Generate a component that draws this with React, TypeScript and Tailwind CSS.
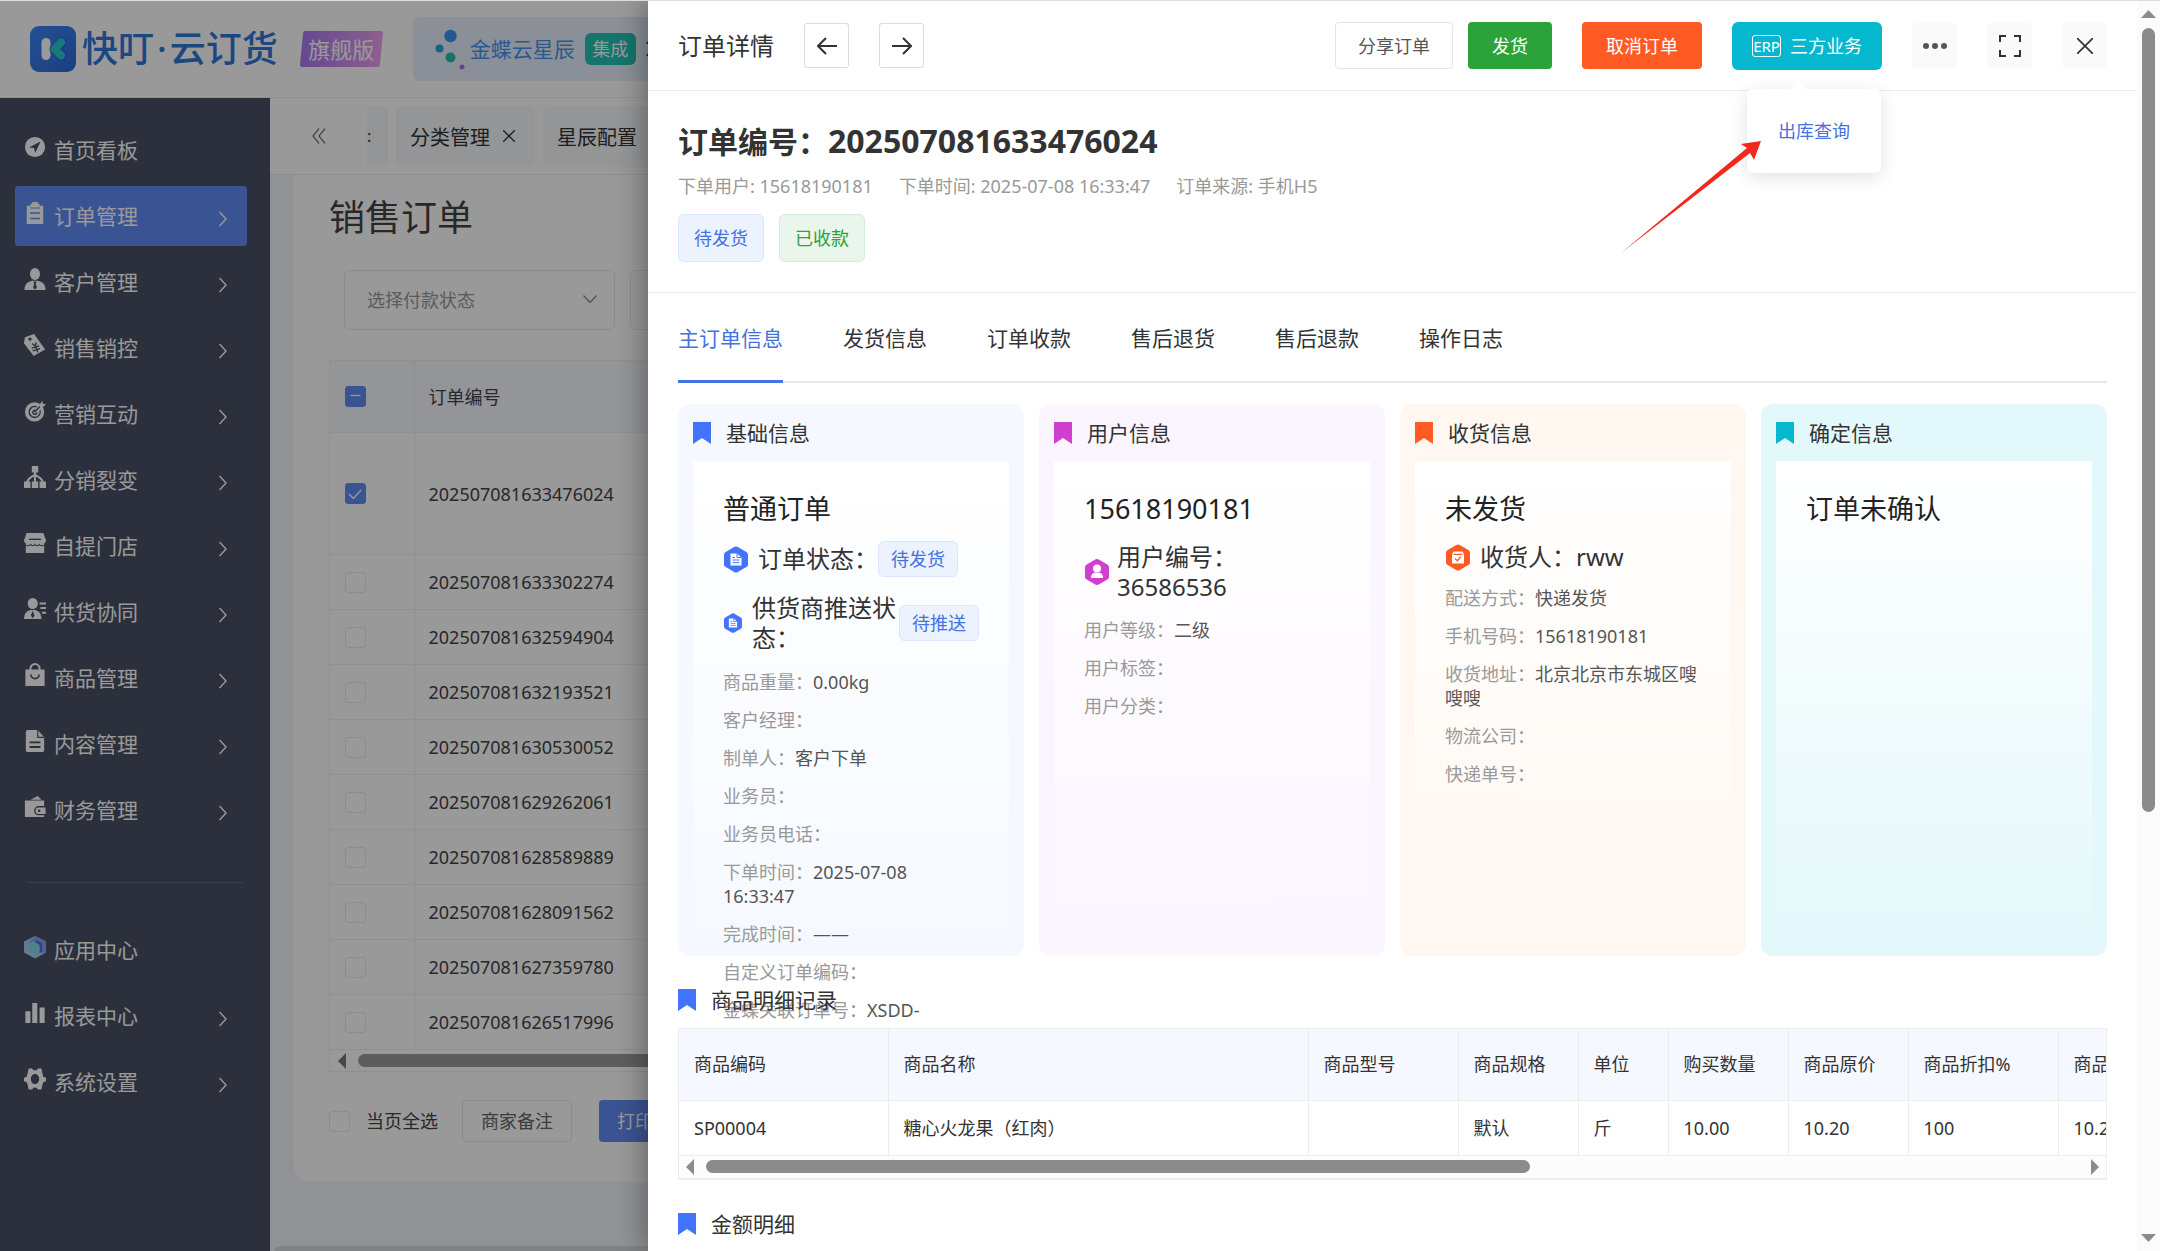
import React from "react";

type IconProps = { className?: string };

const menuIcons: Record<string, React.ReactNode> = {
  compass: (
    <>
      <circle cx="12" cy="12" r="11" fill="currentColor" />
      <path d="M18 6 5.500 12.500 11 13l1.200 5.500z" fill="#495064" />
    </>
  ),
  clipboard: (
    <>
      <path d="M3 4h4v3h10V4h4v20H3z" fill="currentColor" />
      <path d="M9 0h6v2h2v4H7V2h2z" fill="currentColor" />
      <path d="M6.500 12h11M6.500 18h11" stroke="#628cf5" strokeWidth="1.800" />
    </>
  ),
  person: (
    <>
      <ellipse cx="12" cy="6.500" rx="5.500" ry="6.500" fill="currentColor" />
      <path d="M0.500 24c0-6 3.500-9 8.500-10h6c5 1 8.500 4 8.500 10z" fill="currentColor" />
      <path d="m12 14 1.800 2-1 1 1.200 4.500-2 2-2-2 1.200-4.500-1-1z" fill="#495064" />
    </>
  ),
  tag: (
    <>
      <path d="M1 3.500 11 0l12 17-12.500 7L0 10z" fill="currentColor" />
      <circle cx="6.500" cy="5.500" r="1.800" fill="#495064" />
      <path d="m9 10.500 3.500 2.500 1-4M8.500 15.500l8-2.500M9.500 18.500l8-2.500M12.500 13l2.500 7" stroke="#495064" strokeWidth="1.400" fill="none" />
    </>
  ),
  target: (
    <>
      <circle cx="11.500" cy="13" r="10.500" fill="currentColor" />
      <path d="M14 7.500a6 6 0 1 0 3.500 4M13 11.500a2.200 2.200 0 1 0 1 2" stroke="#495064" strokeWidth="1.500" fill="none" />
      <path d="m11.500 13 8-8" stroke="#495064" strokeWidth="1.500" />
      <path d="m16 6 4-5 .8 3L24 5l-5 4z" fill="currentColor" />
    </>
  ),
  tree: (
    <>
      <path d="M8.500 0h7v7h-7zM0 17h7v7H0zM8.500 17h7v7h-7zM17 17h7v7h-7z" fill="currentColor" />
      <path d="M12 6v12M12 9c-2 3-8 3-8.500 9M12 9c2 3 8 3 8.500 9" stroke="currentColor" strokeWidth="2.200" fill="none" />
    </>
  ),
  shop: (
    <>
      <path d="M3 1h18l3 8c0 2-1 3-2 3.500V23H2V12.500C1 12 0 11 0 9z" fill="currentColor" />
      <path d="M5.500 8h13" stroke="#495064" strokeWidth="1.500" />
      <path d="M1 14c2 1.500 5 1.500 6-.5 2 2 4 2 5 0 1 2 3 2 5 0 1 2 4 2 6 .5" stroke="#495064" strokeWidth="1.200" fill="none" />
    </>
  ),
  supplier: (
    <>
      <ellipse cx="9.500" cy="6" rx="5.500" ry="6" fill="currentColor" />
      <path d="M0 23c0-6 3-9 7-10h5c4 1 7 4 7 10z" fill="currentColor" />
      <path d="m9.500 14 2 5-2 3-2-3z" fill="#495064" />
      <path d="M17 6h7M18 11h6M19.500 16H24" stroke="currentColor" strokeWidth="2.200" />
    </>
  ),
  bag: (
    <>
      <path d="M1.500 6h21v18h-21z" fill="currentColor" />
      <path d="M7 9V5a5 5 0 0 1 10 0v4" stroke="currentColor" strokeWidth="2.200" fill="none" />
      <path d="M7.500 11.500a4.500 4.500 0 0 0 9 0" stroke="#495064" strokeWidth="1.800" fill="none" />
    </>
  ),
  doc: (
    <>
      <path d="M4 0h11l7 8v14a2 2 0 0 1-2 2H4a2 2 0 0 1-2-2V2a2 2 0 0 1 2-2z" fill="currentColor" />
      <path d="M15 0v8h7" stroke="#495064" strokeWidth="1.300" fill="none" />
      <path d="M6 13.500h12M6 18.500h12" stroke="#495064" strokeWidth="2" />
    </>
  ),
  wallet: (
    <>
      <path d="m7 4 8-4 4 4z" fill="currentColor" />
      <path d="M1 5h21v6h-6a5 5 0 0 0 0 10h6v2H1z" fill="currentColor" />
      <path d="M16 12.500h7.500v7H16a3.500 3.500 0 0 1 0-7z" fill="currentColor" />
      <circle cx="16.500" cy="16" r="1.400" fill="#495064" />
    </>
  ),
  bars: <path d="M1.500 10H7v13H1.500zM9 1h5.500v22H9zM17 6h5.500v17H17z" fill="currentColor" />,
  gear: (
    <path
      fillRule="evenodd"
      fill="currentColor"
      d="M5 0.500h4l1 2h4l1-2h4l1 5 1 4 3 1v4l-3 1-1 3-1 5h-4l-1-2h-4l-1 2H5l-1-5-1-3-3-1v-4l3-1 1-4zM12 6.500c-2.800 0-4.500 2.500-4.500 5.500s1.700 5.500 4.500 5.500 4.500-2.500 4.500-5.500S14.800 6.500 12 6.500z"
    />
  ),
  cube: (
    <>
      <path d="m12 0 12 6v12l-12 6.500L0 18V6z" fill="#a9cdf8" />
      <path d="M12 0 24 6v12l-4 2.500V9l-8-4.500L4 9z" fill="#7fa4ee" />
      <path d="m11 6 3-1.500 6 3.500v9l-3 2v-9z" fill="#4b6fe0" />
      <path d="m5 9.500 6-3.500 5 3.500V19l-4 2-7-4z" fill="#86d8e0" />
    </>
  ),
};

function MenuIcon({ name }: { name: string }) {
  return (
    <svg viewBox="0 0 24 24" className="mb-1.5 size-[22px] shrink-0 overflow-visible text-white" aria-hidden="true">
      {menuIcons[name]}
    </svg>
  );
}

const menu = [
  { icon: "compass", label: "首页看板", arrow: false },
  { icon: "clipboard", label: "订单管理", arrow: true, active: true },
  { icon: "person", label: "客户管理", arrow: true },
  { icon: "tag", label: "销售销控", arrow: true },
  { icon: "target", label: "营销互动", arrow: true },
  { icon: "tree", label: "分销裂变", arrow: true },
  { icon: "shop", label: "自提门店", arrow: true },
  { icon: "supplier", label: "供货协同", arrow: true },
  { icon: "bag", label: "商品管理", arrow: true },
  { icon: "doc", label: "内容管理", arrow: true },
  { icon: "wallet", label: "财务管理", arrow: true },
];

const menuBottom = [
  { icon: "cube", label: "应用中心", arrow: false },
  { icon: "bars", label: "报表中心", arrow: true },
  { icon: "gear", label: "系统设置", arrow: true },
];

function MenuLink({ icon, label, arrow, active }: { icon: string; label: string; arrow: boolean; active?: boolean }) {
  return (
    <a
      href="#"
      className={`flex h-[60px] items-center rounded-[3px] pr-5 pl-[9px] text-[21px] text-white ${active ? "bg-[#628cf5]" : ""}`}
    >
      <MenuIcon name={icon} />
      <span className="ml-2 flex-1 pt-0.5">{label}</span>
      {arrow && (
        <svg viewBox="0 0 8 16" className="mt-1.5 h-4 w-2" fill="none" stroke="currentColor" strokeWidth="1.400" aria-hidden="true">
          <path d="m.5 1 6.500 7-6.500 7" />
        </svg>
      )}
    </a>
  );
}

function Sidebar() {
  return (
    <aside className="w-[270px] shrink-0 bg-[#495064]">
      <nav className="flex flex-col gap-1.5 pt-[22px] pr-[23px] pl-[15px]">
        {menu.map((m) => (
          <MenuLink key={m.label} {...m} />
        ))}
        <hr className="mt-9 mr-1 mb-[31px] ml-3 border-[#666c7e]" />
        {menuBottom.map((m) => (
          <MenuLink key={m.label} {...m} />
        ))}
      </nav>
    </aside>
  );
}

function TopBar() {
  return (
    <header className="flex h-[97px] shrink-0 items-center border-b border-[#f0f0f0] bg-white pl-[30px] shadow-[0_1px_4px_rgba(0,0,0,0.08)]">
      <svg viewBox="0 0 46 46" className="size-[46px]" aria-hidden="true">
        <defs>
          <linearGradient id="logoFill" x1="0" y1="0" x2="1" y2="1">
            <stop offset="0" stopColor="#3b86f5" />
            <stop offset="1" stopColor="#2f6ad8" />
          </linearGradient>
        </defs>
        <rect width="46" height="46" rx="9" fill="url(#logoFill)" />
        <path d="M16 16.500v13" stroke="#fff" strokeWidth="9" strokeLinecap="round" />
        <path d="M31.500 16.500 25 23l6.500 6.500" stroke="#2f6ad8" strokeWidth="11" strokeLinecap="round" strokeLinejoin="round" fill="none" />
        <path d="M31 16.500 24.500 23l6.500 6.500" stroke="#2bc8cf" strokeWidth="8" strokeLinecap="round" strokeLinejoin="round" fill="none" />
      </svg>
      <span className="ml-1.5 text-4xl leading-[48px] font-medium text-[#2f77d8]">
        快叮<span className="mx-[3px]">·</span>云订货
      </span>
      <span className="relative ml-[22px] flex h-9 w-[83px] items-center justify-center text-[22px] text-white">
        <svg viewBox="0 0 83 36" className="absolute inset-0 h-full w-full" aria-hidden="true">
          <defs>
            <linearGradient id="planFill" x1="0" y1="0" x2="1" y2="0">
              <stop offset="0" stopColor="#a878ee" />
              <stop offset="1" stopColor="#eaa0ee" />
            </linearGradient>
          </defs>
          <path d="M5 0h76a2 2 0 0 1 2 2l-3 31a3 3 0 0 1-3 3H2a2 2 0 0 1-2-2L3 3a3 3 0 0 1 2-3z" fill="url(#planFill)" />
        </svg>
        <span className="relative">旗舰版</span>
      </span>
      <a href="#" className="ml-[30px] flex h-16 items-center rounded-md bg-[#e8effc] pr-4 pl-[22px] text-[21px] text-[#4795f0]">
        <svg viewBox="0 0 30 42" className="mr-[5px] h-[42px] w-[30px]" aria-hidden="true">
          <circle cx="15.500" cy="8" r="6.200" fill="#3b93f0" />
          <circle cx="4.500" cy="20.500" r="4" fill="#2ba6d8" />
          <circle cx="15.500" cy="29.500" r="5" fill="#28bcae" />
          <circle cx="27" cy="39" r="2.500" fill="#a873e8" />
        </svg>
        <span className="pt-0.5">金蝶云星辰</span>
        <span className="ml-2.5 flex h-8 w-[51px] items-center justify-center rounded-md bg-[#22c3b4] text-lg text-white">集成</span>
        <svg viewBox="0 0 8 16" className="ml-2.5 h-4 w-2" fill="none" stroke="#333" strokeWidth="1.500" aria-hidden="true">
          <path d="m.5 1 6.500 7-6.500 7" />
        </svg>
      </a>
    </header>
  );
}

function PageTabs() {
  return (
    <div className="flex h-[77px] shrink-0 items-center overflow-hidden border-b border-[#e9e9e9] bg-white text-xl text-[#333]">
      <button type="button" aria-label="向左滚动" className="mr-[41px] ml-[42px]">
        <svg viewBox="0 0 14 16" className="h-4 w-3.5" fill="none" stroke="#777" strokeWidth="1.300" aria-hidden="true">
          <path d="M7 .5 1 8l6 7.500M13 .5 7 8l6 7.500" />
        </svg>
      </button>
      <div className="flex gap-2">
        <span className="flex h-[61px] w-[21px] items-center overflow-hidden rounded-r-md bg-[#f6f8fc] text-base">:</span>
        <span className="flex h-[61px] items-center gap-[13px] rounded-md bg-[#f6f8fc] pr-5 pl-[14px] whitespace-nowrap">
          <span className="pt-1">分类管理</span>
          <button type="button" aria-label="关闭">
            <svg viewBox="0 0 12 12" className="size-3" stroke="#333" strokeWidth="1.300" aria-hidden="true">
              <path d="M0 0l12 12M12 0 0 12" />
            </svg>
          </button>
        </span>
        <span className="flex h-[61px] w-40 items-center rounded-md bg-[#f6f8fc] pt-1 pl-[14px] whitespace-nowrap">星辰配置</span>
      </div>
    </div>
  );
}

function Tick({ checked, partial, label, id }: { checked?: boolean; partial?: boolean; label?: string; id?: string }) {
  return (
    <span className="relative block size-[21px]">
      <input
        id={id}
        type="checkbox"
        readOnly
        checked={!!(checked || partial)}
        aria-label={label}
        className="block size-[21px] appearance-none rounded-[3px] border border-[#e9e9e9] bg-white checked:border-[#628cf5] checked:bg-[#628cf5]"
      />
      {(checked || partial) && (
        <svg viewBox="0 0 21 21" className="pointer-events-none absolute inset-0" fill="none" stroke="#fff" strokeWidth="1.300" aria-hidden="true">
          <path d={partial ? "M5.500 9.500h10" : "m4 11 4.500 4.500L16 7"} />
        </svg>
      )}
    </span>
  );
}

const orders = [
  "202507081633476024",
  "202507081633302274",
  "202507081632594904",
  "202507081632193521",
  "202507081630530052",
  "202507081629262061",
  "202507081628589889",
  "202507081628091562",
  "202507081627359780",
  "202507081626517996",
];

function OrdersPage() {
  return (
    <main className="flex-1 overflow-hidden bg-[#f1f4f9] pl-6">
      <section className="rounded-bl-2xl bg-white pb-10 pl-[35px]">
        <h2 className="pt-4 text-4xl leading-[54px] text-[#444]">销售订单</h2>
        <div className="mt-[25px] ml-[15px] flex gap-[15px]">
          <label className="relative block">
            <select aria-label="付款状态" className="block h-[60px] w-[271px] appearance-none rounded-md border border-[#e8e8e8] bg-white px-[22px] text-lg text-[#999]">
              <option>选择付款状态</option>
            </select>
            <svg viewBox="0 0 14 8" className="absolute top-[25px] right-[18px] h-2 w-3.5" fill="none" stroke="#888" strokeWidth="1.300" aria-hidden="true">
              <path d="m.5.5 6.500 7 6.500-7" />
            </svg>
          </label>
          <select aria-label="更多筛选" className="block h-[60px] w-[271px] appearance-none rounded-md border border-[#e8e8e8] bg-white px-5 text-lg text-[#999]" />
        </div>
        <div className="mt-[30px] border-l border-[#eee]">
          <table className="w-full border-collapse text-left text-lg text-[#444]">
            <thead>
              <tr className="h-[72px] border-y border-[#eee] bg-[#f5f8ff]">
                <th className="w-[84px] border-r border-[#eee] pl-[15px] font-normal">
                  <Tick partial label="全选" />
                </th>
                <th className="pl-[14px] font-normal">订单编号</th>
              </tr>
            </thead>
            <tbody>
              {orders.map((o, i) => (
                <tr key={o} className={`border-b border-[#eee] ${i === 0 ? "h-[122px]" : "h-[55px]"}`}>
                  <td className="border-r border-[#eee] pl-[15px]">
                    <Tick checked={i === 0} label={o} />
                  </td>
                  <td className="pl-[14px] leading-6">{o}</td>
                </tr>
              ))}
            </tbody>
          </table>
          <div className="flex h-[22px] items-center gap-3 border-b border-[#eee] pl-2">
            <svg viewBox="0 0 8 16" className="h-4 w-2" aria-hidden="true">
              <path d="M8 0v16L0 8z" fill="#777" />
            </svg>
            <div className="h-[13px] flex-1 rounded-l-full bg-[#9b9b9b]" />
          </div>
        </div>
        <div className="mt-7 flex items-center text-lg text-[#444]">
          <Tick id="page-all" />
          <label htmlFor="page-all" className="ml-4">当页全选</label>
          <button type="button" className="ml-6 h-[42px] rounded border border-[#e8e8e8] px-[18px] text-[#666]">商家备注</button>
          <button type="button" className="ml-[27px] h-[42px] rounded bg-[#628cf5] px-[18px] whitespace-nowrap text-white">打印订单</button>
        </div>
      </section>
      <div className="mt-16 -ml-5 h-3 rounded-l-lg bg-[#d8d9dc]" />
    </main>
  );
}

function Bookmark({ className }: IconProps) {
  return (
    <svg viewBox="0 0 18 22" className={`h-[22px] w-[18px] shrink-0 fill-current ${className ?? ""}`} aria-hidden="true">
      <path d="M0 0h18v22l-9-6-9 6z" />
    </svg>
  );
}

function HexIcon({ kind, className }: { kind: "doc" | "user" | "box"; className: string }) {
  return (
    <svg viewBox="0 0 24 26" className={`ml-px shrink-0 ${className}`} aria-hidden="true">
      <path d="M12 0c.7 0 1.200.2 1.800.5l8.500 5c1 .6 1.700 1.500 1.700 2.800v9.400c0 1.300-.7 2.200-1.700 2.800l-8.500 5c-1.200.7-2.400.7-3.600 0l-8.500-5C.7 19.900 0 19 0 17.700V8.300C0 7 .7 6.100 1.700 5.500l8.500-5C10.800.2 11.300 0 12 0z" fill="currentColor" />
      {kind === "doc" && (
        <>
          <path d="M6.500 7H13l4.500 4v8h-11z" fill="#fff" />
          <path d="M13 7v4h4.500M8.500 11H11M8.500 13.500h7M8.500 16.200h7" stroke="currentColor" strokeWidth="1" fill="none" />
        </>
      )}
      {kind === "user" && (
        <>
          <circle cx="12" cy="9.500" r="4" fill="#fff" />
          <path d="M6 19c0-4 2-5 4-5.200h4c2 .2 4 1.200 4 5.200z" fill="#fff" />
        </>
      )}
      {kind === "box" && (
        <>
          <path d="M7.500 7h9l1.500 3v9H6v-9z" fill="#fff" />
          <path d="M7.500 9.800h9M9 14l2.300 2.200 3.700-4" stroke="currentColor" strokeWidth="1.300" fill="none" />
        </>
      )}
    </svg>
  );
}

function Field({ label, value }: { label: string; value?: string }) {
  return (
    <div className="text-lg leading-6">
      <dt className="inline text-[#999]">{label}：</dt>
      <dd className="inline text-[#555]">{value}</dd>
    </div>
  );
}

function StatusTag({ children }: { children: React.ReactNode }) {
  return (
    <span className="flex h-9 shrink-0 items-center rounded-md border border-[#dbe5fb] bg-[#ecf2fe] px-3 text-lg text-[#4472e0]">{children}</span>
  );
}

function InfoCard({ title, tone, mark, heading, children }: { title: string; tone: string; mark: string; heading: string; children?: React.ReactNode }) {
  return (
    <article className={`flex h-[552px] min-w-0 flex-col rounded-xl px-[15px] ${tone}`}>
      <header className="flex h-[57px] shrink-0 items-center gap-[15px]">
        <Bookmark className={mark} />
        <h3 className="text-[21px] leading-8 text-[#333]">{title}</h3>
      </header>
      <div className="min-h-0 flex-1 bg-linear-to-b from-white to-transparent px-[30px] pt-[30px]">
        <p className="text-[27px] leading-9 text-[#222]">{heading}</p>
        {children}
      </div>
    </article>
  );
}

const outlineBtn = "flex h-[45px] w-[45px] items-center justify-center rounded-[3px] border border-[#dcdcdc]";
const plainBtn = "flex h-[45px] w-[45px] items-center justify-center rounded-[3px] bg-[#fafafa]";

function DrawerHeader() {
  return (
    <header className="flex h-[90px] shrink-0 items-center border-b border-[#ebebeb] px-[30px]">
      <h2 className="mr-[30px] text-2xl text-[#333]">订单详情</h2>
      <div className="flex gap-[30px]">
        <button type="button" aria-label="上一单" className={outlineBtn}>
          <svg viewBox="0 0 20 18" className="h-[18px] w-5" fill="none" stroke="#333" strokeWidth="2" aria-hidden="true">
            <path d="M20 9H1M9 1 1 9l8 8" />
          </svg>
        </button>
        <button type="button" aria-label="下一单" className={outlineBtn}>
          <svg viewBox="0 0 20 18" className="h-[18px] w-5" fill="none" stroke="#333" strokeWidth="2" aria-hidden="true">
            <path d="M0 9h19M11 1l8 8-8 8" />
          </svg>
        </button>
      </div>
      <div className="ml-auto flex items-center gap-[30px] text-lg">
        <div className="flex gap-[15px]">
          <button type="button" className="h-[47px] rounded border border-[#e4e4e4] px-[22px] text-[#555]">分享订单</button>
          <button type="button" className="h-[47px] rounded bg-[#2ba33a] px-6 text-white">发货</button>
        </div>
        <button type="button" className="h-[47px] rounded bg-[#ff5a23] px-6 text-white">取消订单</button>
        <div className="relative">
          <button type="button" aria-expanded="true" className="flex h-12 items-center gap-[9px] rounded-md bg-[#06b8cf] px-5 text-white">
            <span className="flex h-[22px] w-[29px] items-center justify-center rounded-[3px] border border-white text-[15px] leading-5">ERP</span>
            三方业务
          </button>
          <div className="absolute top-[67px] right-px z-20 w-[134px] rounded-md bg-white py-[26px] text-center shadow-[0_4px_18px_rgba(0,0,0,0.12)]">
            <span className="absolute -top-1.5 left-[46px] size-3 rotate-45 bg-white" />
            <a href="#" className="block h-8 leading-8 text-[#4472e0]">出库查询</a>
          </div>
          <svg viewBox="0 0 140 112" className="pointer-events-none absolute top-[119px] -left-[111px] z-30 h-28 w-[140px]" aria-hidden="true">
            <path d="M0 112 126 7 120 3 140 0 133 19 129 12z" fill="#f5261b" />
          </svg>
        </div>
        <button type="button" aria-label="更多" className={plainBtn}>
          <svg viewBox="0 0 24 6" className="h-1.5 w-6" fill="#555" aria-hidden="true">
            <circle cx="3" cy="3" r="3" />
            <circle cx="12" cy="3" r="3" />
            <circle cx="21" cy="3" r="3" />
          </svg>
        </button>
        <button type="button" aria-label="全屏" className={plainBtn}>
          <svg viewBox="0 0 22 22" className="size-[22px]" fill="none" stroke="#333" strokeWidth="2" aria-hidden="true">
            <path d="M1 7V1h6M15 1h6v6M21 15v6h-6M7 21H1v-6" />
          </svg>
        </button>
        <button type="button" aria-label="关闭" className={plainBtn}>
          <svg viewBox="0 0 16 16" className="size-4" stroke="#333" strokeWidth="1.700" aria-hidden="true">
            <path d="M0 0l16 16M16 0 0 16" />
          </svg>
        </button>
      </div>
    </header>
  );
}

const detailTabs = ["主订单信息", "发货信息", "订单收款", "售后退货", "售后退款", "操作日志"];

const goods = [
  { head: "商品编码", value: "SP00004", width: "w-[209px]" },
  { head: "商品名称", value: "糖心火龙果（红肉）", width: "w-[420px]" },
  { head: "商品型号", value: "", width: "w-[150px]" },
  { head: "商品规格", value: "默认", width: "w-[120px]" },
  { head: "单位", value: "斤", width: "w-[90px]" },
  { head: "购买数量", value: "10.00", width: "w-[120px]" },
  { head: "商品原价", value: "10.20", width: "w-[120px]" },
  { head: "商品折扣%", value: "100", width: "w-[150px]" },
  { head: "商品折后价", value: "10.20", width: "w-[150px]" },
];

function SectionTitle({ children }: { children: React.ReactNode }) {
  return (
    <div className="flex items-center gap-[15px]">
      <Bookmark className="text-[#4273fb]" />
      <h3 className="text-[21px] leading-8 text-[#333]">{children}</h3>
    </div>
  );
}

function Drawer() {
  return (
    <div role="dialog" aria-label="订单详情" className="absolute inset-y-0 right-0 flex w-[70%] bg-white shadow-[-6px_0_24px_rgba(0,0,0,0.3)]">
      <div className="flex min-w-0 flex-1 flex-col overflow-hidden">
        <DrawerHeader />
        <section className="border-b border-[#ebebeb] px-[30px] py-[30px]">
          <h1 className="text-3xl leading-10 font-bold text-[#333]">
            订单编号：<span className="text-[32px] leading-10">202507081633476024</span>
          </h1>
          <p className="mt-3 flex gap-[26px] text-lg leading-6 text-[#999]">
            <span>下单用户: 15618190181</span>
            <span>下单时间: 2025-07-08 16:33:47</span>
            <span>订单来源: 手机H5</span>
          </p>
          <div className="mt-4 flex gap-[15px] text-lg">
            <span className="flex h-12 items-center rounded-md border border-[#dbe5fb] bg-[#ecf2fe] px-[15px] text-[#4472e0]">待发货</span>
            <span className="flex h-12 items-center rounded-md border border-[#d5ecd8] bg-[#eaf6ec] px-[15px] text-[#2ba33a]">已收款</span>
          </div>
        </section>
        <div className="shrink-0 px-[30px]">
          <nav role="tablist" className="flex h-[90px] gap-[60px] border-b-2 border-[#e8e8e8] text-[21px] text-[#333]">
            {detailTabs.map((t, i) => (
              <button
                key={t}
                type="button"
                role="tab"
                aria-selected={i === 0}
                className={i === 0 ? "-mb-0.5 border-b-3 border-[#4472e0] pt-1 text-[#4472e0]" : "pt-1 pb-px"}
              >
                {t}
              </button>
            ))}
          </nav>
          <div className="mt-[21px] grid grid-cols-4 gap-[15px]">
            <InfoCard title="基础信息" tone="bg-[#f5f9ff]" mark="text-[#4273fb]" heading="普通订单">
              <div className="mt-3.5 flex items-center">
                <HexIcon kind="doc" className="h-[27px] w-6 text-[#4273fb]" />
                <span className="ml-2.5 text-2xl leading-[30px] text-[#333]">订单状态：</span>
                <StatusTag>待发货</StatusTag>
              </div>
              <div className="mt-4 flex items-center">
                <HexIcon kind="doc" className="h-5 w-[18px] text-[#4273fb]" />
                <span className="ml-2.5 w-[147px] text-2xl leading-[30px] text-[#333]">供货商推送状态：</span>
                <StatusTag>待推送</StatusTag>
              </div>
              <dl className="mt-[17px] flex flex-col gap-3.5">
                <Field label="商品重量" value="0.00kg" />
                <Field label="客户经理" />
                <Field label="制单人" value="客户下单" />
                <Field label="业务员" />
                <Field label="业务员电话" />
                <Field label="下单时间" value="2025-07-08 16:33:47" />
                <Field label="完成时间" value="——" />
                <Field label="自定义订单编码" />
                <Field label="金蝶关联订单号" value="XSDD-" />
              </dl>
            </InfoCard>
            <InfoCard title="用户信息" tone="bg-[#faf5ff]" mark="text-[#cf40cf]" heading="15618190181">
              <div className="mt-[15px] flex items-center">
                <HexIcon kind="user" className="h-[26px] w-6 text-[#cf40cf]" />
                <span className="ml-2 w-[130px] text-2xl leading-[30px] text-[#333]">用户编号：36586536</span>
              </div>
              <dl className="mt-4 flex flex-col gap-3.5">
                <Field label="用户等级" value="二级" />
                <Field label="用户标签" />
                <Field label="用户分类" />
              </dl>
            </InfoCard>
            <InfoCard title="收货信息" tone="bg-[#fff7f0]" mark="text-[#ff5a23]" heading="未发货">
              <div className="mt-[15px] flex items-center">
                <HexIcon kind="box" className="h-[27px] w-6 text-[#ff5a23]" />
                <span className="ml-2.5 text-2xl leading-[30px] text-[#333]">收货人：rww</span>
              </div>
              <dl className="mt-3.5 flex flex-col gap-3.5">
                <Field label="配送方式" value="快递发货" />
                <Field label="手机号码" value="15618190181" />
                <Field label="收货地址" value="北京北京市东城区嗖嗖嗖" />
                <Field label="物流公司" />
                <Field label="快递单号" />
              </dl>
            </InfoCard>
            <InfoCard title="确定信息" tone="bg-[#e3f8fb]" mark="text-[#06b8cf]" heading="订单未确认" />
          </div>

          <section className="relative mt-7">
            <SectionTitle>商品明细记录</SectionTitle>
            <div className="mt-3 overflow-hidden border border-b-2 border-[#ededed] bg-white">
              <table className="w-[1529px] table-fixed border-collapse text-left text-lg text-[#333]">
                <thead>
                  <tr className="h-[71px] border-b border-[#ededed] bg-[#f5f8ff]">
                    {goods.map((g) => (
                      <th key={g.head} className={`border-r border-[#ededed] pl-[15px] font-normal whitespace-nowrap ${g.width}`}>
                        {g.head}
                      </th>
                    ))}
                  </tr>
                </thead>
                <tbody>
                  <tr className="h-[55px] border-b border-[#ededed]">
                    {goods.map((g) => (
                      <td key={g.head} className="border-r border-[#ededed] pl-[15px]">
                        {g.value}
                      </td>
                    ))}
                  </tr>
                </tbody>
              </table>
              <div className="flex h-[22px] items-center bg-[#fcfcfc] px-[7px]">
                <svg viewBox="0 0 8 16" className="h-4 w-2" aria-hidden="true">
                  <path d="M8 0v16L0 8z" fill="#8b8b8b" />
                </svg>
                <div className="mx-3 flex-1">
                  <div className="h-[13px] w-3/5 rounded-full bg-[#8b8b8b]" />
                </div>
                <svg viewBox="0 0 8 16" className="h-4 w-2" aria-hidden="true">
                  <path d="M0 0v16l8-8z" fill="#8b8b8b" />
                </svg>
              </div>
            </div>
          </section>

          <section className="mt-7 border-b border-[#ededed] pb-3">
            <SectionTitle>金额明细</SectionTitle>
          </section>
        </div>
      </div>
      <div className="flex w-[23px] shrink-0 flex-col items-center bg-[#fbfbfb] py-[9px]" aria-hidden="true">
        <svg viewBox="0 0 15 8" className="h-2 w-[15px]">
          <path d="M0 8h15L7.500 0z" fill="#8b8b8b" />
        </svg>
        <div className="mt-2.5 flex w-[13px] flex-1 flex-col">
          <div className="h-[65%] rounded-full bg-[#8b8b8b]" />
        </div>
        <svg viewBox="0 0 15 8" className="h-2 w-[15px]">
          <path d="M0 0h15L7.500 8z" fill="#8b8b8b" />
        </svg>
      </div>
    </div>
  );
}

export default function App() {
  return (
    <div className="relative flex h-screen flex-col overflow-hidden border-t border-[#dddddd] bg-white font-['Noto_Sans','Noto_Sans_CJK_SC',sans-serif]">
      <TopBar />
      <div className="flex min-h-0 flex-1">
        <Sidebar />
        <div className="flex min-w-0 flex-1 flex-col">
          <PageTabs />
          <OrdersPage />
        </div>
      </div>
      <div className="absolute inset-0 bg-black/40" />
      <Drawer />
    </div>
  );
}
